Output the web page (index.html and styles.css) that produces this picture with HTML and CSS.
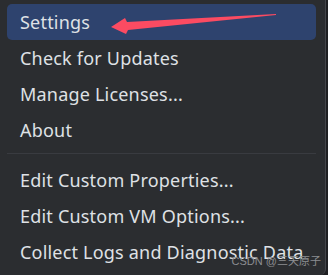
FILE: index.html
```html
<!DOCTYPE html>
<html lang="en">
<head>
    <meta charset="UTF-8">
    <title>Help Menu</title>
    <link rel="stylesheet" href="styles.css">
</head>
<body>
    <div class="menu">
        <div class="menu-item active">Settings</div>
        <div class="menu-item">Check for Updates</div>
        <div class="menu-item">Manage Licenses...</div>
        <div class="menu-item">About</div>
        <div class="separator"></div>
        <div class="menu-item">Edit Custom Properties...</div>
        <div class="menu-item">Edit Custom VM Options...</div>
        <div class="menu-item">Collect Logs and Diagnostic Data</div>
        <div class="watermark">CSDN @三天原子</div>
    </div>
    <svg class="arrow" width="328" height="40" viewBox="0 0 328 40">
        <polygon points="276,14 127,22 125,18 111,27 126,34 128,30 276,15" fill="#fb4b62"/>
    </svg>
</body>
</html>
```

FILE: styles.css
```css
* {
    margin: 0;
    padding: 0;
    box-sizing: border-box;
}

body {
    position: relative;
    background: #1e1f22;
    font-family: "Noto Sans", "Open Sans", sans-serif;
    width: 328px;
    height: 275px;
    overflow: hidden;
}

.menu {
    position: relative;
    width: 326px;
    height: 275px;
    background: #2b2d30;
    border-right: 1px solid #43454a;
    border-bottom-right-radius: 6px;
    padding: 4px 9px 0 7px;
}

.menu-item {
    height: 36px;
    display: flex;
    align-items: center;
    padding-left: 13px;
    color: #dfe1e5;
    font-size: 18px;
    letter-spacing: 0.2px;
    border-radius: 5px;
}

.menu-item.active {
    background: #2e436e;
}

.arrow {
    position: absolute;
    left: 0;
    top: 0;
}

.separator {
    height: 1px;
    background: #393b40;
    margin: 5px 0 8px;
}

.watermark {
    position: absolute;
    right: 4px;
    bottom: 7px;
    font-size: 11px;
    color: #8b8d91;
    font-family: "Liberation Sans", "Noto Sans CJK SC", sans-serif;
}
```
